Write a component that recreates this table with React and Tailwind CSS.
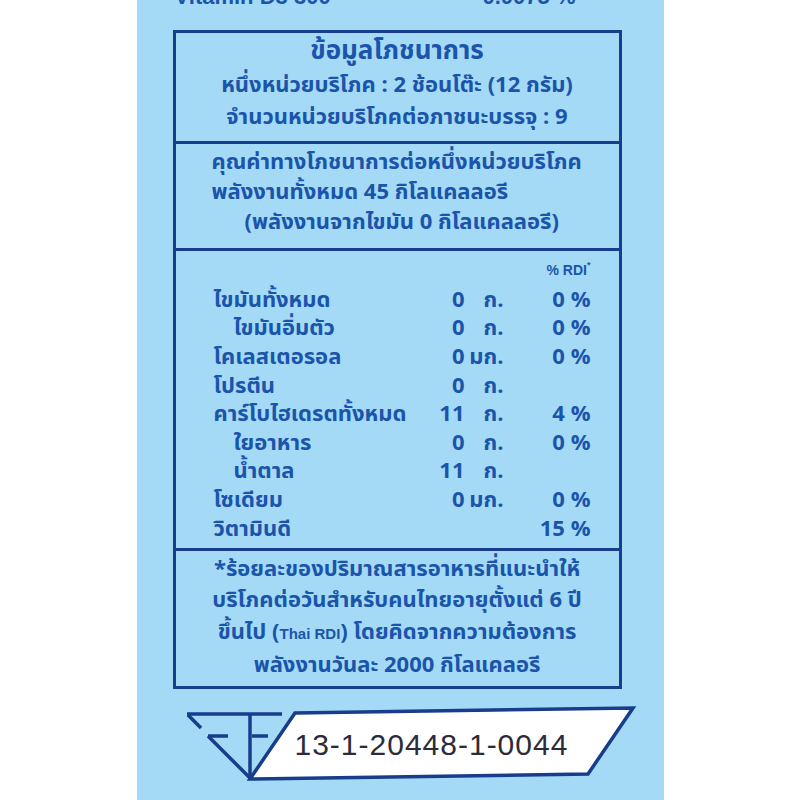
import React from "react";

const T = "text-[#1b54ab]";

const rows = [
  { name: "ไขมันทั้งหมด", ind: false, num: "0", unit: "ก.", pct: "0 %" },
  { name: "ไขมันอิ่มตัว", ind: true, num: "0", unit: "ก.", pct: "0 %" },
  { name: "โคเลสเตอรอล", ind: false, num: "0", unit: "มก.", pct: "0 %" },
  { name: "โปรตีน", ind: false, num: "0", unit: "ก.", pct: "" },
  { name: "คาร์โบไฮเดรตทั้งหมด", ind: false, num: "11", unit: "ก.", pct: "4 %" },
  { name: "ใยอาหาร", ind: true, num: "0", unit: "ก.", pct: "0 %" },
  { name: "น้ำตาล", ind: true, num: "11", unit: "ก.", pct: "" },
  { name: "โซเดียม", ind: false, num: "0", unit: "มก.", pct: "0 %" },
  { name: "วิตามินดี", ind: false, num: "", unit: "", pct: "15 %" },
];

export default function App() {
  return (
    <div className="w-[800px] h-[800px] bg-white flex justify-center overflow-hidden font-['Noto_Sans_Thai','Noto_Sans','DejaVu_Sans',sans-serif]">
      <div className="w-[527px] h-[800px] bg-[#a4daf5] flex flex-col pl-[36px]">
        <div className="h-[30px] overflow-hidden relative">
          <div className={`flex ${T} text-[22px] font-bold leading-[22px] -mt-[14px]`}>
            <span className="w-[310px] pl-[2px] font-['Liberation_Sans',sans-serif]">Vitamin D3 300</span>
            <span className="font-['Liberation_Sans',sans-serif]">0.0075 %</span>
          </div>
        </div>
        <div className="w-[449px] border-[3px] border-[#173d8c] flex flex-col">
          <div className={`h-[111px] border-b-[3px] border-[#173d8c] flex flex-col items-center ${T} font-bold`}>
            <div className="text-[26px] leading-[37px]">ข้อมูลโภชนาการ</div>
            <div className="text-[22px] leading-[32px]">หนึ่งหน่วยบริโภค : 2 ช้อนโต๊ะ (12 กรัม)</div>
            <div className="text-[22px] leading-[32px]">จำนวนหน่วยบริโภคต่อภาชนะบรรจุ : 9</div>
          </div>
          <div className={`h-[107px] border-b-[3px] border-[#173d8c] flex flex-col pl-[36px] pt-[4px] ${T} font-bold text-[22px] leading-[30px]`}>
            <div>คุณค่าทางโภชนาการต่อหนึ่งหน่วยบริโภค</div>
            <div>พลังงานทั้งหมด 45 กิโลแคลลอรี</div>
            <div className="pl-[33px]">(พลังงานจากไขมัน 0 กิโลแคลลอรี)</div>
          </div>
          <div className={`h-[300px] border-b-[3px] border-[#173d8c] flex flex-col pl-[38px] pt-[8px] ${T} font-bold`}>
            <div className="w-[377px] flex justify-end text-[14px] leading-[22px] mb-[6px] font-['Liberation_Sans',sans-serif]">
              <span>% RDI</span>
              <span className="text-[9px] leading-[12px]">*</span>
            </div>
            {rows.map((r, i) => (
              <div key={i} className="flex text-[22px] leading-[28.6px]">
                <div className={`w-[225px] ${r.ind ? "pl-[20px]" : ""}`}>{r.name}</div>
                <div className="w-[26px] text-right">{r.num}</div>
                <div className="w-[39px] text-right">{r.unit}</div>
                <div className="w-[87px] text-right">{r.pct}</div>
              </div>
            ))}
          </div>
          <div className={`h-[135px] flex flex-col items-center pt-[3px] ${T} font-bold text-[22px] leading-[31.7px]`}>
            <div>*ร้อยละของปริมาณสารอาหารที่แนะนำให้</div>
            <div>บริโภคต่อวันสำหรับคนไทยอายุตั้งแต่ 6 ปี</div>
            <div>
              ขึ้นไป (<span className="text-[15px] font-['Liberation_Sans',sans-serif]">Thai RDI</span>) โดยคิดจากความต้องการ
            </div>
            <div>พลังงานวันละ 2000 กิโลแคลอรี</div>
          </div>
        </div>
        <div className="relative h-[112px] -ml-[36px] w-[527px]">
          <svg className="absolute inset-0" width="527" height="112" viewBox="137 688 527 112" fill="none">
            <polygon points="295,712 633,707 588,773 250,778" fill="#ffffff" stroke="#173d8c" strokeWidth="3.5" strokeLinejoin="miter" />
            <g stroke="#173d8c" strokeWidth="3.5" strokeLinecap="butt">
              <line x1="187" y1="713" x2="282" y2="713" />
              <line x1="188" y1="714" x2="201" y2="727" />
              <line x1="208" y1="735" x2="228" y2="735" />
              <line x1="208" y1="735" x2="251" y2="778" />
              <line x1="250" y1="713" x2="250" y2="779" />
              <line x1="252" y1="735" x2="268" y2="735" />
            </g>
          </svg>
          <div className="relative pl-[158px] pt-[38px] text-[30px] leading-[36px] tracking-[1px] text-[#2b2b3a] font-['Liberation_Sans',sans-serif]">
            13-1-20448-1-0044
          </div>
        </div>
      </div>
    </div>
  );
}
